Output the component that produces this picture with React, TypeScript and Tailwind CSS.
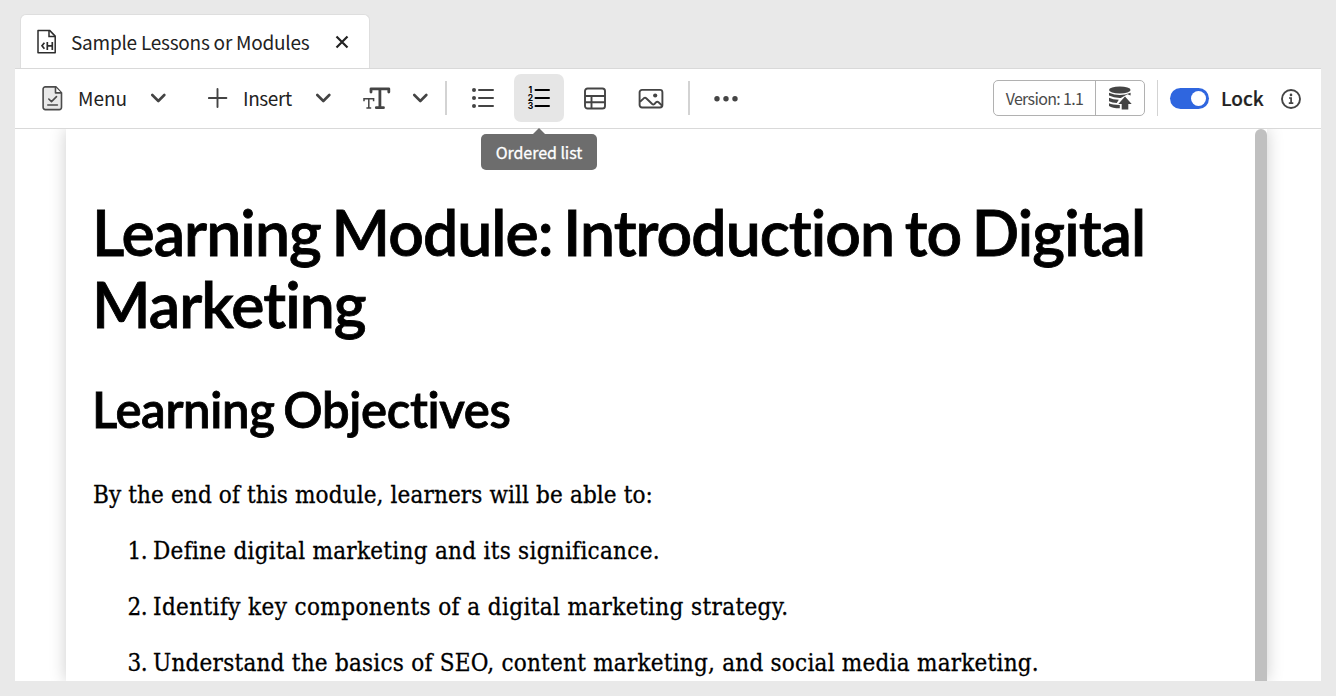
import type { ReactNode } from 'react';

const UI = "font-['Adobe_Clean','Noto_Sans_CJK_SC',sans-serif]";
const SLAB = "font-['Roboto_Slab','DejaVu_Serif_Condensed','DejaVu_Serif',serif]";

function Chevron() {
  return (
    <svg width="16" height="10" viewBox="0 0 16 10" fill="none" stroke="#444" strokeWidth="2.6" strokeLinecap="round" strokeLinejoin="round">
      <path d="M2.3 2l6 6 6-6" />
    </svg>
  );
}

function HtmlFileIcon() {
  return (
    <svg width="20" height="25" viewBox="0 0 20 25" fill="none" stroke="#2c2c2c" strokeWidth="1.5">
      <path d="M1 1.400h11.600L18.200 7.100v16.600H1z" strokeLinejoin="round" />
      <path d="M12 1.500v6h6" />
      <path d="M7.400 13.800L5 16.800l2.400 3M10.300 12.900v8M15.300 12.900v8M10.300 16.900h5" strokeWidth="1.700" />
    </svg>
  );
}

function MenuIcon() {
  return (
    <svg width="22" height="26" viewBox="0 0 22 26" fill="none" stroke="#4b4b4b" strokeWidth="1.6" strokeLinecap="round" strokeLinejoin="round">
      <path d="M3.300 1.900h10.600l5.600 5.800v14.600a2.300 2.300 0 0 1-2.300 2.300H3.300a2.200 2.200 0 0 1-2.200-2.300V4.100a2.200 2.200 0 0 1 2.200-2.200z" fill="#e9e9e9" />
      <path d="M13.500 2.300v5.600h5.800" fill="#fff" />
      <path d="M6.800 14l2.700 2.600 5-5M5.800 20h9.600" />
    </svg>
  );
}

function TextSizeIcon() {
  return (
    <svg width="28" height="24" viewBox="0 0 28 24" fill="none" stroke="#444">
      <path d="M8 6V2.800h17.800V6M16.900 2.800v18.600M13.300 21.700h7.200" strokeWidth="2.800" strokeLinecap="round" strokeLinejoin="round" />
      <path d="M1 15.200v-2.400h9.600v2.400M5.800 12.800v9.200M3.400 22h4.800" strokeWidth="1.500" />
    </svg>
  );
}

function BulletIcon() {
  return (
    <svg width="24" height="22" viewBox="0 0 24 22" stroke="#444" strokeWidth="2" strokeLinecap="round">
      <path d="M8 3h14M8 11h14M8 19h14" />
      <g fill="#444" stroke="none">
        <circle cx="3" cy="3" r="2" />
        <circle cx="3" cy="11" r="2" />
        <circle cx="3" cy="19" r="2" />
      </g>
    </svg>
  );
}

function OrderedIcon() {
  return (
    <svg width="24" height="24" viewBox="0 0 24 24">
      <path d="M8.500 4h13.500M8.500 12h13.500M8.500 20h13.500" stroke="#000" strokeWidth="2" strokeLinecap="round" />
      <g className="font-['Inter',sans-serif] text-[8.500px] font-bold" fill="#000" textAnchor="middle">
        <text x="3.400" y="7">1</text>
        <text x="3.400" y="15.200">2</text>
        <text x="3.400" y="23.300">3</text>
      </g>
    </svg>
  );
}

function TableIcon() {
  return (
    <svg width="22" height="23" viewBox="0 0 22 23" fill="none" stroke="#444" strokeWidth="1.900">
      <rect x="1" y="1.500" width="20" height="20" rx="2.600" />
      <path d="M1 9h20M1 15.200h20M7.500 9v12.500" />
    </svg>
  );
}

function ImageIcon() {
  return (
    <svg width="26" height="21" viewBox="0 0 26 21" fill="none" stroke="#444" strokeWidth="1.900" strokeLinejoin="round">
      <rect x="1.600" y="1.900" width="22.800" height="17.600" rx="2.400" />
      <path d="M2 13.700l4-3.600q1.100-.9 2.200.1l6 5.800q1.100 1 2.200 0l1.600-1.700q1.300-1.100 2.500 0l3.700 3.400" />
      <circle cx="17.200" cy="7.500" r="2.100" fill="#444" stroke="none" />
    </svg>
  );
}

function DatabaseIcon() {
  return (
    <svg width="24" height="24" viewBox="0 0 24 24" fill="#444">
      <ellipse cx="11.800" cy="4" rx="10.800" ry="3.400" />
      <path d="M1 6.700q10.800 4.600 21.600 0V9.400L19.400 8.200 12.800 12q-7 .2-11.800-2.400z" />
      <path d="M1 11.700q4 2 9.800 2.100l-2 3.300Q4 16.900 1 15.200z" />
      <path d="M1 17.200q3.400 1.500 10.800 1.700v3.300q-7.500 0-10.800-2.300z" />
      <path d="M17 10.500l6.700 7.500h-3.400v5.600h-6.600V18h-3.400z" />
    </svg>
  );
}

function InfoIcon() {
  return (
    <svg width="20" height="21" viewBox="0 0 20 21" fill="none" stroke="#444" strokeWidth="1.900">
      <circle cx="10" cy="11" r="9" />
      <circle cx="10" cy="6.900" r="1.300" fill="#444" stroke="none" />
      <path d="M8 10h2.100v5M7.800 15.100h4.500" strokeWidth="1.700" />
    </svg>
  );
}

function Item({ n, children }: { n: string; children: ReactNode }) {
  return (
    <li className="flex h-14 gap-[6px]">
      <span className="w-[54px] text-right tracking-[-0.5px]">{n}</span>
      {children}
    </li>
  );
}

export default function App() {
  return (
    <div className={`flex h-[696px] w-[1336px] flex-col overflow-hidden bg-[#e9e9e9] px-[15px] pt-[14px] pb-[15px] text-[#222] ${UI}`}>
      <div className="flex h-[54px] shrink-0 pl-[5px]">
        <div className="flex w-[350px] items-center rounded-t-[6px] border-x border-t border-[#dedede] bg-white pl-4">
          <HtmlFileIcon />
          <span className="ml-[14px] w-[240px] text-[19px] leading-6 tracking-[-0.24px] whitespace-nowrap">Sample Lessons or Modules</span>
          <svg className="ml-[24px]" width="14" height="14" viewBox="0 0 14 14" stroke="#222" strokeWidth="2.200">
            <path d="M1.500 1.500l11 11M12.500 1.500l-11 11" />
          </svg>
        </div>
      </div>

      <div className="flex h-[61px] w-[1306px] shrink-0 items-center border-y border-[#d9d9d9] bg-white pb-px pl-[27px] text-[19px] leading-6 whitespace-nowrap">
        <div className="flex w-[166px] items-center">
          <MenuIcon />
          <span className="ml-[14px] w-[72px]">Menu</span>
          <Chevron />
        </div>
        <div className="flex w-[155px] items-center">
          <svg width="20" height="20" viewBox="0 0 20 20" stroke="#444" strokeWidth="1.900" strokeLinecap="round">
            <path d="M9.500 1v18M.9 10h17.500" />
          </svg>
          <span className="ml-[15px] w-[72px] tracking-[-0.4px]">Insert</span>
          <Chevron />
        </div>
        <div className="flex w-[82px] items-center gap-[21px]">
          <TextSizeIcon />
          <Chevron />
        </div>
        <div className="h-[34px] w-[2px] bg-[#d3d3d3]" />
        <div className="ml-[11px] flex items-center gap-[6px]">
          <button className="flex h-12 w-[50px] items-center justify-center"><BulletIcon /></button>
          <div className="relative">
            <button className="flex h-12 w-[50px] items-center justify-center rounded-[7px] bg-[#e6e6e6]"><OrderedIcon /></button>
            <div className="absolute top-[54px] left-[-33px] z-10 flex flex-col items-center">
              <svg width="14" height="7" viewBox="0 0 14 7" className="block"><path d="M0 7l7-7 7 7z" fill="#6d6d6d" /></svg>
              <div className="-mt-px flex h-[36px] w-[116px] items-center justify-center rounded-[5px] bg-[#6d6d6d] text-[16px] tracking-[-0.05px] text-white [-webkit-text-stroke:0.3px_white]">Ordered list</div>
            </div>
          </div>
          <button className="flex h-12 w-[50px] items-center justify-center"><TableIcon /></button>
          <button className="flex h-12 w-[50px] items-center justify-center"><ImageIcon /></button>
        </div>
        <div className="ml-[12px] h-[34px] w-[2px] bg-[#d3d3d3]" />
        <svg className="ml-[23px]" width="26" height="8" viewBox="0 0 26 8" fill="#444">
          <circle cx="4" cy="4.700" r="2.700" />
          <circle cx="13" cy="4.700" r="2.700" />
          <circle cx="22" cy="4.700" r="2.700" />
        </svg>
        <div className="ml-[254px] flex h-[36px] w-[152px] rounded-[5px] border border-[#b1b1b1] text-[#4b4b4b]">
          <div className="flex w-[102px] items-center justify-center border-r border-[#b1b1b1] pb-px text-[16px] tracking-[-0.65px]">Version: 1.1</div>
          <div className="flex flex-1 items-center justify-center"><DatabaseIcon /></div>
        </div>
        <div className="ml-[12px] h-9 w-px bg-[#d3d3d3]" />
        <div className="ml-[12px] flex h-[21px] w-[39px] items-center justify-end rounded-full bg-[#2f66df] pr-[3px]">
          <div className="size-[15px] rounded-full bg-white" />
        </div>
        <span className="ml-[12px] w-[60px] text-[19px] font-medium [-webkit-text-stroke:0.2px_#222]">Lock</span>
        <InfoIcon />
      </div>

      <div className="flex min-h-0 w-[1306px] flex-1 justify-between overflow-hidden bg-white pr-[54px] pl-[51px] text-black">
        <div className="flex w-[1201px] justify-between shadow-[0_0_16px_rgba(0,0,0,0.2)]">
          <main className="w-[1100px] pl-[27px]">
            <h1 className="mt-[67px] -ml-px font-['Lato',sans-serif] text-[62.500px] leading-[72px] font-semibold tracking-[-0.940px] [word-spacing:-4px] whitespace-nowrap [-webkit-text-stroke:0.8px_black]">
              Learning Module: Introduction to Digital<br />Marketing
            </h1>
            <h2 className="mt-[39px] -ml-px font-['Lato',sans-serif] text-[49px] leading-[60px] font-semibold tracking-[-0.350px] [word-spacing:-3px] whitespace-nowrap [-webkit-text-stroke:0.8px_black]">Learning Objectives</h2>
            <div className={`mt-[28px] text-[24px] leading-[56px] whitespace-nowrap [-webkit-text-stroke:0.3px_black] ${SLAB}`}>
              <p className="tracking-[0.120px]">By the end of this module, learners will be able to:</p>
              <ol>
                <Item n="1."><span className="tracking-[0.280px]">Define digital marketing and its significance.</span></Item>
                <Item n="2."><span className="tracking-[0.380px]">Identify key components of a digital marketing strategy.</span></Item>
                <Item n="3."><span className="tracking-[0.230px]">Understand the basics of SEO, content marketing, and social media marketing.</span></Item>
              </ol>
            </div>
          </main>
          <div className="h-full w-[12px] rounded-t-full bg-[#c0c0c0]" />
        </div>
      </div>
    </div>
  );
}
